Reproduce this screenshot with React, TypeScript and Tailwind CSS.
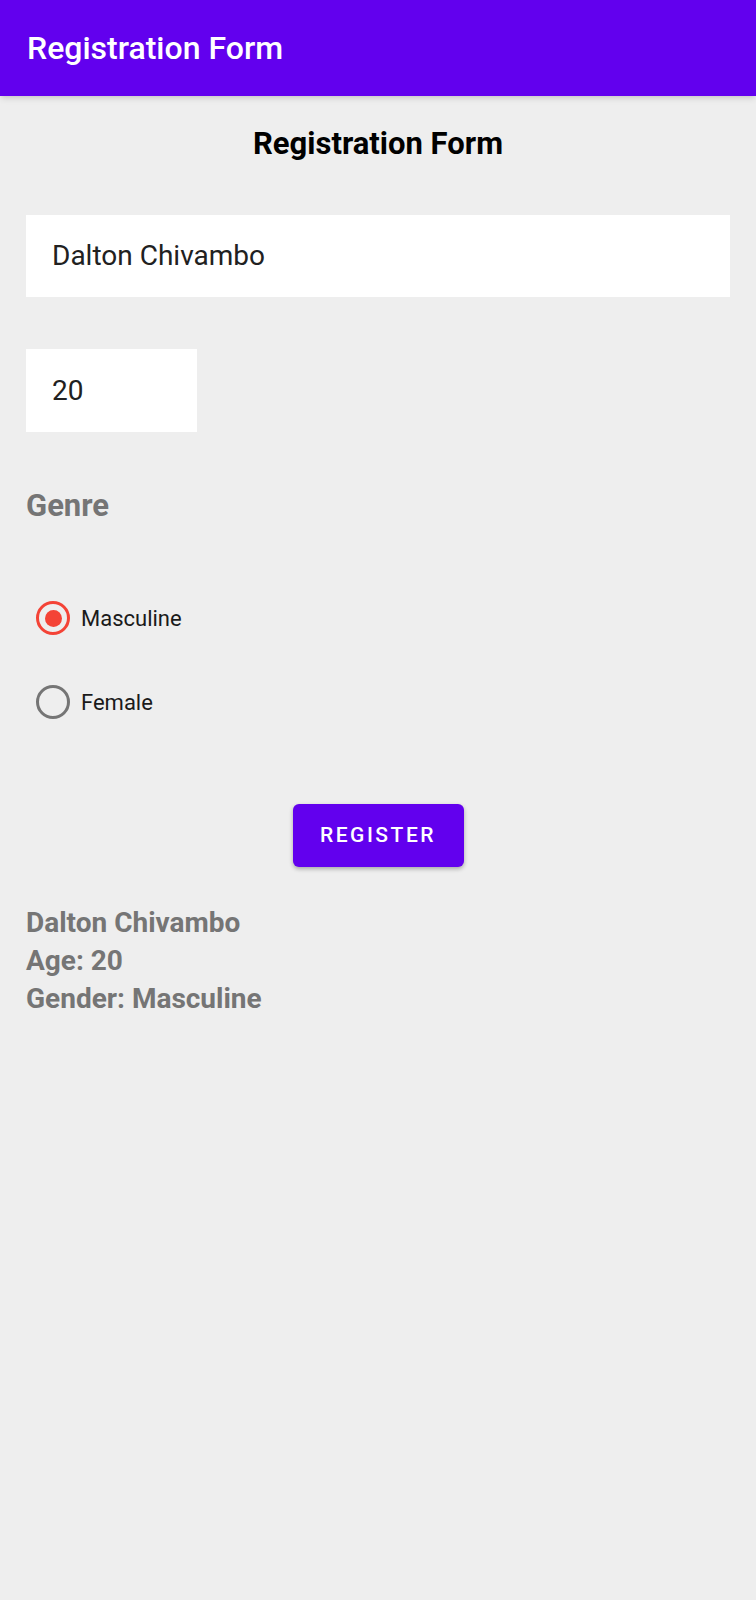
import React from "react";

export default function App() {
  const font = { fontFamily: "Roboto, 'Noto Sans', sans-serif" };
  return (
    <div className="min-h-[1600px] w-full bg-[#eeeeee]" style={font}>
      <div className="flex h-[96px] items-center bg-[#6200ee] pl-[27px] shadow-md">
        <span className="text-[32px] font-medium leading-none text-white">Registration Form</span>
      </div>
      <div className="flex flex-col px-[26px]">
        <div className="mt-[30px] text-center text-[31px] font-bold leading-[36px] text-black">
          Registration Form
        </div>
        <div className="mt-[53px] flex h-[82px] items-center bg-white pl-[26px] text-[28px] text-[#212121]">
          Dalton Chivambo
        </div>
        <div className="mt-[52px] flex h-[83px] w-[171px] items-center bg-white pl-[26px] text-[28px] text-[#212121]">
          20
        </div>
        <div className="mt-[56px] text-[31px] font-bold leading-[36px] text-[#757575]">Genre</div>
        <div className="mt-[52px] flex flex-col">
          <div className="flex h-[84px] items-center gap-[11px] pl-[10px]">
            <div className="flex h-[34px] w-[34px] items-center justify-center rounded-full border-[3.5px] border-[#f44336]">
              <div className="h-[17px] w-[17px] rounded-full bg-[#f44336]" />
            </div>
            <span className="text-[22px] text-[#1a1a1a]">Masculine</span>
          </div>
          <div className="flex h-[84px] items-center gap-[11px] pl-[10px]">
            <div className="h-[34px] w-[34px] rounded-full border-[3.5px] border-[#757575]" />
            <span className="text-[22px] text-[#1a1a1a]">Female</span>
          </div>
        </div>
        <div className="mt-[60px] flex justify-center">
          <div className="flex h-[63px] w-[171px] items-center justify-center rounded-[6px] bg-[#6200ee] text-[21px] font-medium tracking-[2.5px] text-white shadow-[0_2px_4px_rgba(0,0,0,0.3)]">
            REGISTER
          </div>
        </div>
        <div className="mt-[37px] flex flex-col text-[28px] font-bold leading-[38px] text-[#757575]">
          <span>Dalton Chivambo</span>
          <span>Age: 20</span>
          <span>Gender: Masculine</span>
        </div>
      </div>
    </div>
  );
}
